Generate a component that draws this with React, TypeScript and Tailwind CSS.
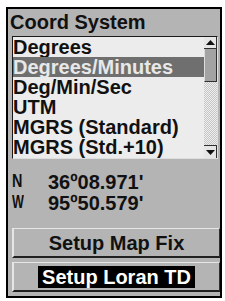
import React from 'react';

const items = ['Degrees', 'Degrees/Minutes', 'Deg/Min/Sec', 'UTM', 'MGRS (Standard)', 'MGRS (Std.+10)'];

const ScrollBar: React.FC = () => (
  <div className="w-[13px] flex flex-col bg-[#e4e4e4]">
    <div className="h-[12px] flex items-center justify-center border-r border-b border-[#303030] bg-[#e6e6e6]">
      <svg width="9" height="5" viewBox="0 0 9 5">
        <polygon points="4.5,0 9,5 0,5" fill="#111" />
      </svg>
    </div>
    <div className="h-[33px] bg-[#a3a3a3] border-l border-[#dcdcdc] border-r border-b border-r-[#303030] border-b-[#303030]" />
    <div className="flex-1 bg-[repeating-conic-gradient(#c4c4c4_0_25%,#efefef_0_50%)] bg-[length:2px_2px]" />
    <div className="h-[13px] flex items-center justify-center border-r border-t border-[#303030] bg-[#e6e6e6]">
      <svg width="9" height="5" viewBox="0 0 9 5">
        <polygon points="0,0 9,0 4.5,5" fill="#111" />
      </svg>
    </div>
  </div>
);

const App: React.FC = () => {
  const selected = 1;

  return (
    <div
      className="w-[225px] h-[301px] bg-white pt-[7px] pl-[6px] text-[#111]"
      style={{ fontFamily: '"Liberation Sans", Arial, sans-serif' }}
    >
      <div className="w-[216px] h-[291px] border-2 border-black bg-[#b4b4b4] flex flex-col">
        <div className="h-[27px] pl-[2px] text-[20px] font-bold leading-[27px]">Coord System</div>

        <div className="ml-[4px] mr-[2px] h-[123px] flex border-t border-l border-[#1a1a1a] border-r border-b border-r-[#dedede] border-b-[#dedede] bg-[#ececec]">
          <div className="flex-1 flex flex-col">
            {items.map((item, i) => (
              <div
                key={item}
                className={`h-[20px] text-[20px] leading-[20px] font-bold whitespace-nowrap ${
                  i === selected ? 'bg-[#6f6f6f] text-[#e8e8e8]' : ''
                }`}
              >
                {item}
              </div>
            ))}
          </div>
          <ScrollBar />
        </div>

        <div className="mt-[12px] pl-[4px] flex flex-col text-[20px] font-bold">
          <div className="h-[21px] flex items-center">
            <span className="w-[36px] text-[18px] inline-block scale-x-[0.8] origin-left">N</span>
            <span>36º08.971'</span>
          </div>
          <div className="h-[21px] flex items-center">
            <span className="w-[36px] text-[18px] inline-block scale-x-[0.7] origin-left">W</span>
            <span>95º50.579'</span>
          </div>
        </div>

        <div className="mt-[15px] ml-[4px] flex flex-col gap-[4px]">
          <div className="h-[30px] flex items-center justify-center border-t border-l-2 border-[#e6e6e6] border-b-2 border-r border-b-[#202020] border-r-[#303030] text-[20px] font-bold">
            Setup Map Fix
          </div>
          <div className="h-[30px] flex items-center justify-center border-t border-l-2 border-[#e6e6e6] border-b-2 border-r border-b-[#202020] border-r-[#303030] text-[20px] font-bold">
            <span className="bg-black text-white px-[4px] leading-[22px]">Setup Loran TD</span>
          </div>
        </div>
      </div>
    </div>
  );
};

export default App;
